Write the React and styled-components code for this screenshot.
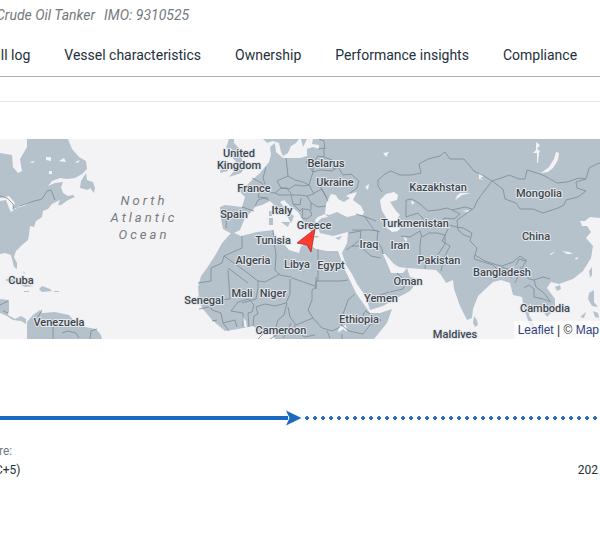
import React from "react";
import styled, { createGlobalStyle } from "styled-components";

const GlobalStyle = createGlobalStyle`
  * { box-sizing: border-box; }
  body { margin: 0; background: #fff; font-family: Roboto, "Liberation Sans", sans-serif; color: #23303b; overflow-x: hidden; }
`;

const Page = styled.main`
  overflow: hidden;
  padding-bottom: 64px;
`;

const VesselMeta = styled.header`
  display: flex;
  gap: 9px;
  height: 30px;
  margin-left: -4px;
  align-items: center;
  font-size: 14px;
  font-style: italic;
  color: #75797d;
  white-space: nowrap;
`;

const Tabs = styled.nav`
  display: flex;
  gap: 34px;
  height: 47px;
  padding-top: 16px;
  padding-left: 16px;
  margin-left: -32px;
  border-bottom: 1px solid #aeb3b3;
`;

const Tab = styled.a`
  flex: none;
  font-size: 14px;
  line-height: 18px;
  color: #23303b;
  text-decoration: none;
`;

const Divider = styled.hr`
  height: 1px;
  margin: 24px 0 37px;
  border: 0;
  background: #e6e8e8;
`;

const MapPanel = styled.section`
  position: relative;
  height: 200px;
  overflow: hidden;
  background: #f3f3f6;
`;

const MapCanvas = styled.svg`
  display: block;
  width: 100%;
  height: 100%;
`;

const Land = styled.path`
  fill: #b5c2cb;
`;

const Water = styled.path`
  fill: #f3f3f6;
`;

const Border = styled.path`
  fill: none;
  stroke: #7c8a94;
  stroke-width: 0.8;
  stroke-linejoin: round;
`;

const Country = styled.text`
  font: 500 11px Roboto, sans-serif;
  fill: #3f464d;
  stroke: #e4e9ed;
  stroke-width: 2px;
  stroke-linejoin: round;
  paint-order: stroke;
  text-anchor: middle;
`;

const Ocean = styled.text`
  font: italic 400 13px Roboto, sans-serif;
  letter-spacing: 3px;
  fill: #777a80;
  text-anchor: middle;
`;

const Attribution = styled.div`
  position: absolute;
  right: 0;
  bottom: 0;
  padding: 0 1px 0 4px;
  font: 12px/18px "Liberation Sans", Arial, sans-serif;
  color: #333;
  background: rgba(255, 255, 255, 0.75);
  white-space: nowrap;
`;

const MapLink = styled.a`
  color: #303c80;
  text-decoration: none;
`;

const Route = styled.div`
  display: flex;
  align-items: center;
  height: 16px;
  margin-top: 71px;
`;

const Sailed = styled.div`
  flex: 0 0 48%;
  height: 4px;
  background: #1c69c0;
`;

const RouteArrow = styled.svg`
  flex: none;
  width: 16px;
  height: 16px;
  margin-left: -2px;
`;

const Remaining = styled.div`
  flex: 1;
  height: 4px;
  margin-left: 3px;
  background: radial-gradient(circle at 2px 2px, #2e70bb 0 2px, transparent 2px) 0 0 / 8px 4px repeat-x;
`;

const Schedule = styled.div`
  display: flex;
  justify-content: space-between;
  align-items: flex-end;
  margin-top: 16px;
  padding-right: 2px;
  font-size: 12px;
  line-height: 18px;
  white-space: nowrap;
`;

const Departure = styled.div`
  display: flex;
  flex-direction: column;
  gap: 1px;
  margin-left: -5px;
`;

const Caption = styled.span`
  padding-left: 4px;
  color: #75797d;
`;

const TABS = ["Call log", "Vessel characteristics", "Ownership", "Performance insights", "Compliance"];

const LAND = [
  // North America, Newfoundland and the Caribbean
  "M0 14L12 16 13 28 18 34 22 32 20 20 27 8 27 0H68L72 10 79 18 86 22 87 30 82 35 75 39 67 40 60 39 52 42 48 47 55 44 63 43 61 48 63 54 68 57 73 56 75 58 68 61 61 66 58 66 60 61 52 65 48 70 43 72 42 78 36 82 34 88 30 87 29 96 28 101 22 106 16 112 14 118 17 124 17 130 14 128 11 116 5 114 0 115Z",
  "M86 34L81 42 80 49 88 51 90 49 94 54 95 49 93 43 87 41Z",
  "M6 140L15 140 22 142 28 146 34 147 25 148 15 143 6 142ZM39 150L42 147 50 150 52 152 42 153ZM24 152h5v1h-5ZM54 152h5v1h-5ZM23 132l2 2-1 1Z",
  "M0 160L9 161 9 172 8 176 15 180 21 177 26 180 26 185 21 182 13 181 7 177 0 174Z",
  "M27 200V183L33 176 40 171 42 174 55 173 69 176 75 183 85 188 96 190 101 196 102 200Z",
  // Africa
  "M232 93L241 97 257 93 273 91 275 98 274 103 284 105 289 111 299 114 301 107 308 105 316 110 327 112 338 112 345 131 356 154 365 167 370 174 380 174 392 170 387 184 374 200H275L272 194 259 192 253 187 238 190 225 192 212 181 202 169 199 160 198 148 201 137 207 129 216 115 222 104Z",
  // Eurasia
  "M220 68L225 66 242 68 245 58 237 50 247 46 252 41 260 34 269 23 271 16 270 8 275 4 276 13 283 19 300 19 307 17 307 10 313 8 319 10 319 6 312 5 313 0H600V79L590 78 585 82 580 82 582 87 587 87 591 93 586 99 593 107 591 119 583 132 573 140 559 145 551 143 547 149 555 160 555 170 547 178 543 172 534 170 530 164 529 176 535 186 537 197 531 190 528 181 524 170 522 158 513 156 510 144 501 141 493 143 478 157 473 170 472 179 467 181 460 167 454 150 453 141 446 144 441 136 436 131 421 130 407 129 399 128 394 125 385 115 383 115 387 124 391 134 403 134 407 129 410 138 419 140 410 152 397 159 383 167 370 171 366 158 357 145 352 135 346 126 342 114 347 104 348 93 333 97 320 94 316 84 322 79 328 78 325 75 318 78 315 81 317 87 311 93 307 88 302 80 298 73 290 67 284 61 280 63 286 71 294 77 291 84 287 77 277 69 270 62 262 66 255 68 252 72 245 79 240 91 232 95 223 90 221 80Z",
  // British Isles, Scandinavia
  "M229 0L234 0 234 4 239 9 240 17 246 27 241 34 229 38 235 31 231 27 236 22 231 18 232 10 226 9ZM222 24L228 22 228 32 220 34Z",
  "M263 0H299L296 4 291 7 288 14 283 17 281 13 279 4 273 2 267 4ZM301 0H307L303 8Z",
  // Mediterranean islands
  "M269 72h3v5h-3ZM269 79h4v7h-4ZM281 83l9 0-2 5ZM311 97l8 0-2 2ZM335 99l7-2-3 4Z",
  // South and East Asian islands
  "M474 177L477 181 478 186 475 188 473 184ZM555 148l5-2 1 4-4 2ZM589 132l3-4 0 8-2 3ZM589 154L594 151 594 163 598 168 592 167 588 160ZM593 172l5 2 1 5-4-1ZM580 178l6-5-2 6Z",
];

const WATER = [
  // Black Sea, Caspian Sea
  "M325 75L326 65 331 55 336 56 338 60 344 63 350 59 346 57 350 55 357 53 353 61 361 67 364 73 363 76 356 76 347 78 337 73 329 76Z",
  "M380 61L386 55 394 53 398 56 397 61 390 63 396 72 400 76 397 80 401 88 398 92 392 93 386 88 387 80 382 72 381 67Z",
  // inland lakes
  "M0 59L9 57 15 64 12 70 24 67 30 63 20 67 11 73 9 69 6 61 0 62Z",
  "M29 23l6-1-2 2ZM46 18l5 0 0 4-5-1ZM59 22l5-3 2 4ZM75 23l5-2-2 3ZM49 32h3v3h-3Z",
  "M556 13L559 14 558 21 553 29 548 33 541 34 549 28 554 20ZM536 3l4 3-3 4 3 2-1 2-1 10-1 0 0-10-4 0 3-3Z",
  "M383 14l6-1-3 5ZM365 48l4-3-1 6ZM479 34l5 3-4 2 4 2-5-1ZM456 58l4-4 11 0-9 2-5 4ZM455 59l2 1-1 1ZM462 72l7-1-1 2ZM550 115l6-3-5 4ZM562 112l7 1 4 2-6 0ZM575 119l4-1-3 3ZM403 97l4 3-1 3ZM411 62l4 1-3 3Z",
  "M242 177l4 5 1 7-3-2ZM340 178l3-2 1 2ZM339 188l7-2 1 7-4-3-5 4Z",
];

const BORDERS = [
  "M0 57L7 59 13 65 14 71M20 67L31 63 42 60 47 52 51 51 55 61M0 166L8 162M3 172L8 174M38 178l4-7M53 200V188M62 194L68 192 76 194 79 199M90 200L91 192 97 190",
  // Iberia, France and central Europe
  "M223 72L227 73 226 89M242 68L254 72M255 67L258 61 264 59 269 61M252 39L258 42 263 45 260 50 258 58 268 59M266 28L263 39 265 45M286 19L288 37 277 42 281 49 275 54 266 53M288 37L295 41 303 43 309 46 313 33 306 23M287 49L281 49M281 49L289 50 295 46 303 47 309 46 314 55 307 57 299 56 292 56 287 49M275 54L279 56 291 56 293 65 300 66 301 59M293 65L300 72 303 69 302 79 307 80 312 76 310 71 304 70M314 54L322 50 327 59M311 64L318 68 326 67M307 57L311 64 311 71M313 33L320 31 332 32 338 28 343 36 351 35 359 42 357 49 350 54M313 33L313 24 306 22M313 24L318 17 324 18 324 9 318 10M324 18L332 21 334 31M319 0L324 2 325 10",
  // Kazakhstan and Central Asia
  "M378 47L378 41 385 35 391 32 400 36 411 36 421 34 419 25 428 20 440 17 445 13 450 20 464 20 474 32 484 37 492 42M378 47L382 53M406 78L406 61 412 60 420 65 428 72 438 71 447 69 452 71 465 68 472 70M406 78L418 74 426 83 435 89 443 84 444 79 454 80 460 75 452 71M492 42L485 51 477 62 474 69 463 77 457 81 458 91 464 96 470 98",
  // Mongolia and China
  "M492 42L504 38 509 36 519 40 525 40 527 31 537 34 545 37 557 44 567 43 579 39 586 40 589 29 597 25 600 24M492 42L503 50 505 60 516 64 520 70 533 70 543 74 558 69 564 66 566 61 578 58 586 52 577 49 576 43 586 40M443 84L456 88 463 89 472 94 470 102 477 109 475 116 485 122 497 126 502 127 513 123 520 117 527 122M475 116L474 120 493 126 497 130 498 138M500 128L508 130 511 139M516 126l3-6 7 2-5 9-6 13M520 128L523 132 529 140 534 141 543 138 550 140M524 149L529 146 534 150 534 158 543 160 551 163M534 141L536 148 544 154 550 162",
  // Middle East
  "M352 91L362 91 369 91 378 92 377 101 382 110 383 115M349 94L361 92 360 101 352 107 346 111M352 107L360 107 371 117 381 119M401 97L410 98 420 92 422 98 429 94 437 94M421 98L420 107 420 116 426 121 425 130M437 94L445 96 445 105 437 117 427 123M448 90L442 102 450 107 444 119 441 132M356 75L366 78 376 82M365 78L374 91 380 93M397 134L406 143 403 150 390 153M377 157L389 153M320 47L328 62",
  // North and West Africa
  "M242 97L242 109 224 117 222 124 211 129 211 142 198 144M224 117L245 132 258 142 265 143 280 135M273 91L274 102 276 116 275 131 280 136 290 138M290 137L292 139 315 147 316 150 316 142 318 142 318 110M228 131L230 160 209 162M228 129L248 144M258 142L258 149 256 160 242 164M198 158L207 161 212 171M212 171L221 174 223 184 229 192M223 184L235 181 237 188M231 172L238 163 249 160 254 166 252 173 248 174 249 188M243 187L243 174 231 172M256 168L265 165 275 167 286 164 290 155 290 140M253 187L254 177 258 175 256 168M287 164L284 176 278 181 275 191M288 168L290 178 296 186 313 179 308 171 312 161 312 151 316 148M291 184L287 193 283 199M294 186L304 198 315 196M313 179L322 189 332 192 340 188M318 142L341 142 348 141M348 161L355 155M348 161L343 175 341 186 349 192 363 195 370 186 381 181 365 172M327 192L330 199M367 171L363 175 365 180M316 148L316 138M270 200L278 195M258 200L263 195M209 168L199 170M217 181L212 182M342 195L342 200",
];

const COUNTRIES = [
  ["United", 239, 18], ["Kingdom", 239, 30], ["Belarus", 326, 28], ["Ukraine", 335, 47],
  ["France", 254, 53], ["Italy", 282, 75], ["Spain", 234, 79], ["Greece", 314, 90],
  ["Tunisia", 273, 105], ["Algeria", 253, 125], ["Libya", 297, 129], ["Egypt", 331, 130],
  ["Mali", 242, 158], ["Niger", 273, 158], ["Senegal", 204, 165], ["Cameroon", 281, 195],
  ["Ethiopia", 359, 184], ["Yemen", 381, 163], ["Oman", 408, 146], ["Iraq", 369, 109],
  ["Iran", 400, 110], ["Pakistan", 439, 125], ["Kazakhstan", 438, 52], ["Turkmenistan", 415, 88],
  ["Mongolia", 539, 58], ["China", 536, 101], ["Bangladesh", 502, 137], ["Cambodia", 545, 173],
  ["Maldives", 455, 199], ["Cuba", 21, 145], ["Venezuela", 59, 187],
];

function VesselMap() {
  return (
    <MapPanel aria-label="Vessel position">
      <MapCanvas viewBox="0 0 600 200" preserveAspectRatio="xMidYMid slice" role="img" aria-label="World map">
        {LAND.map((d) => <Land key={d} d={d} />)}
        {WATER.map((d) => <Water key={d} d={d} />)}
        {BORDERS.map((d) => <Border key={d} d={d} />)}
        <Ocean x="144" y="66">North</Ocean>
        <Ocean x="144" y="83">Atlantic</Ocean>
        <Ocean x="144" y="100">Ocean</Ocean>
        {COUNTRIES.map(([name, x, y]) => <Country key={name} x={x} y={y}>{name}</Country>)}
        <path d="M315 90L297 104 307 106 311 113Z" fill="#ff3b32" stroke="#a72c2c" strokeWidth="0.8" />
      </MapCanvas>
      <Attribution>
        <MapLink href="#leaflet">Leaflet</MapLink> | © <MapLink href="#map">Map</MapLink>
      </Attribution>
    </MapPanel>
  );
}

export default function App() {
  return (
    <>
      <GlobalStyle />
      <Page>
        <VesselMeta>
          <span>Crude Oil Tanker</span>
          <span>IMO: 9310525</span>
        </VesselMeta>
        <Tabs aria-label="Vessel sections">
          {TABS.map((name) => <Tab href="#section" key={name}>{name}</Tab>)}
        </Tabs>
        <Divider />
        <VesselMap />
        <Route>
          <Sailed />
          <RouteArrow viewBox="0 0 16 16" aria-hidden="true">
            <path d="M0 0.5L15.5 8 0 15.5 3.5 8Z" fill="#1c69c0" />
          </RouteArrow>
          <Remaining />
        </Route>
        <Schedule>
          <Departure>
            <Caption>re:</Caption>
            <span>C+5)</span>
          </Departure>
          <span>202</span>
        </Schedule>
      </Page>
    </>
  );
}
